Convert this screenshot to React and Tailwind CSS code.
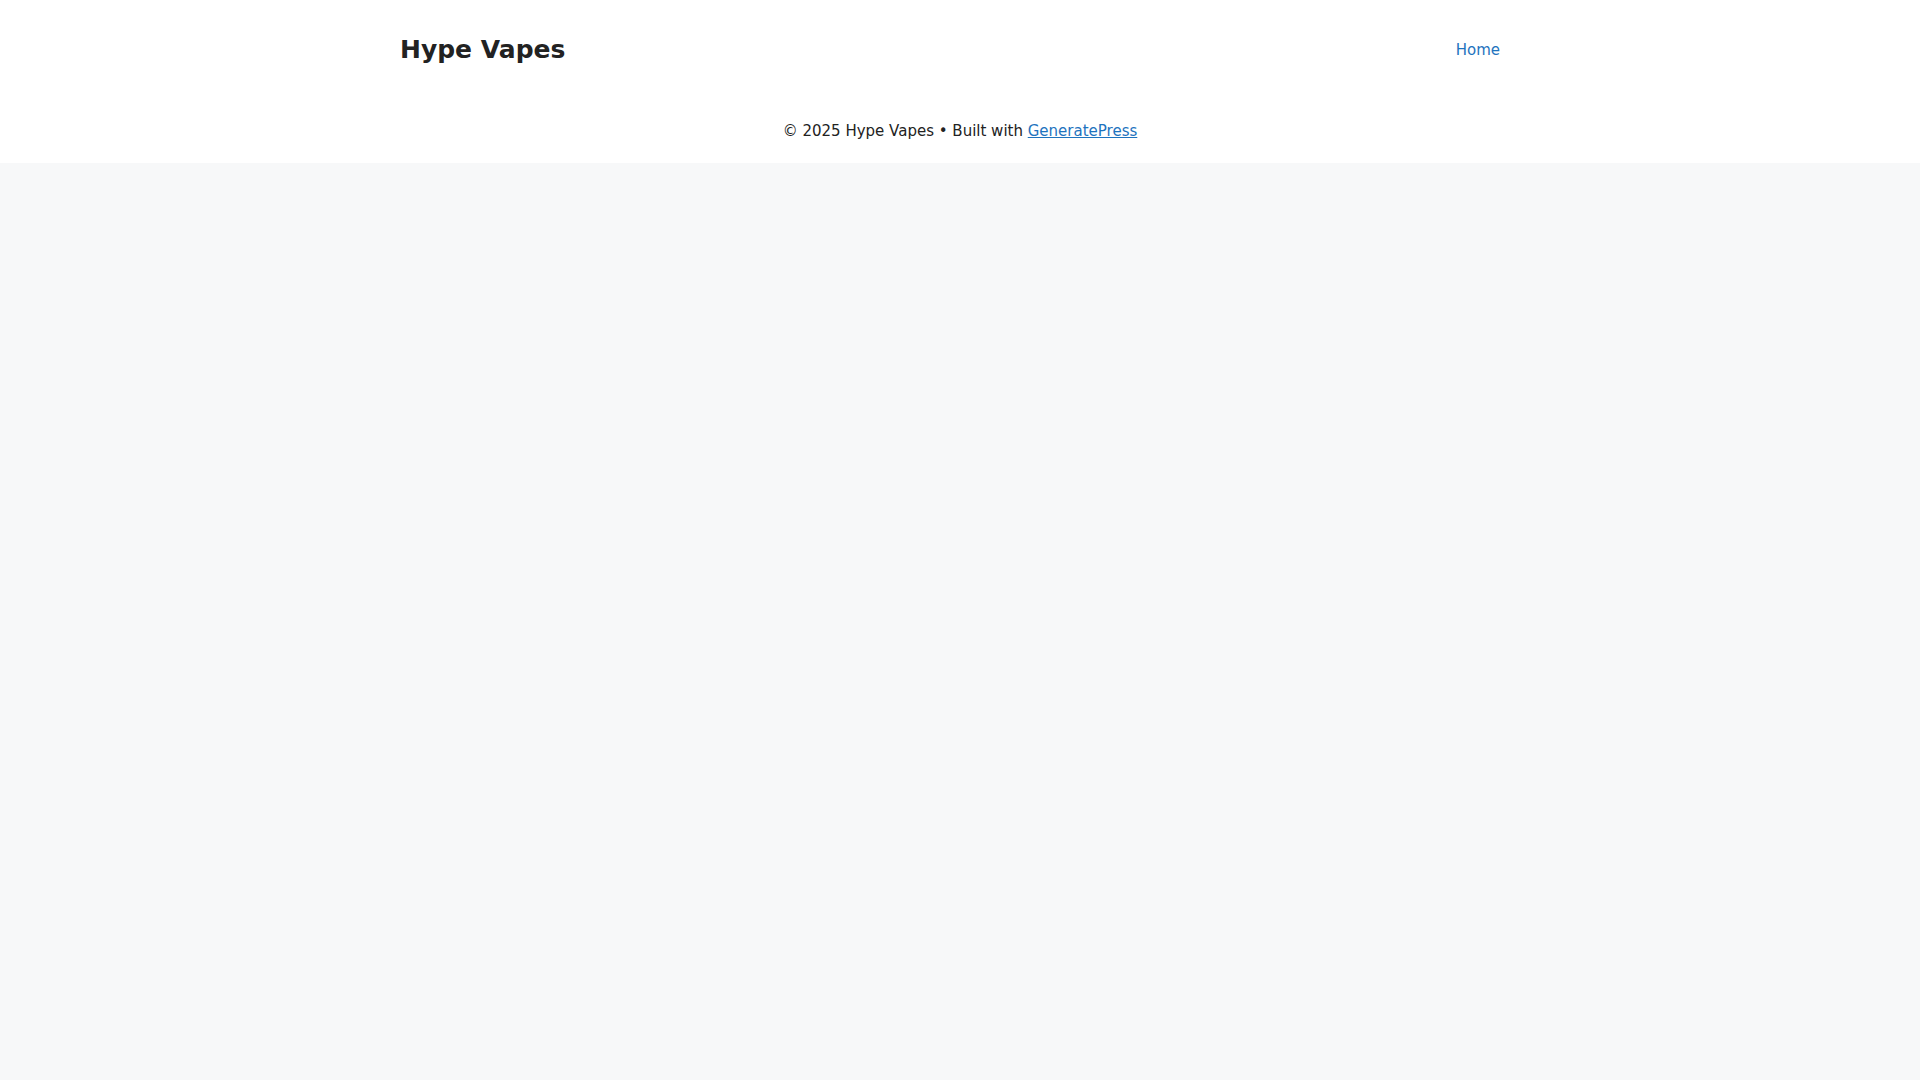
export default function App() {
  return (
    <div className="min-h-screen bg-[#f7f8f9] text-[#222222]" style={{ fontFamily: '"DejaVu Sans", sans-serif' }}>
      <header className="bg-white">
        <div className="max-w-[1200px] mx-auto px-10 py-5 flex items-center justify-between">
          <p className="text-[25px] font-bold leading-[1.5] text-[#222222]">Hype Vapes</p>
          <nav>
            <a href="#" className="block px-5 text-[15px] leading-[60px] text-[#1e73be]">Home</a>
          </nav>
        </div>
      </header>
      <footer className="bg-white">
        <div className="max-w-[1200px] mx-auto px-10 py-5 text-center text-[15px] leading-[1.5]">
          © 2025 Hype Vapes • Built with{" "}
          <a href="#" className="text-[#1e73be] underline">GeneratePress</a>
        </div>
      </footer>
    </div>
  );
}
